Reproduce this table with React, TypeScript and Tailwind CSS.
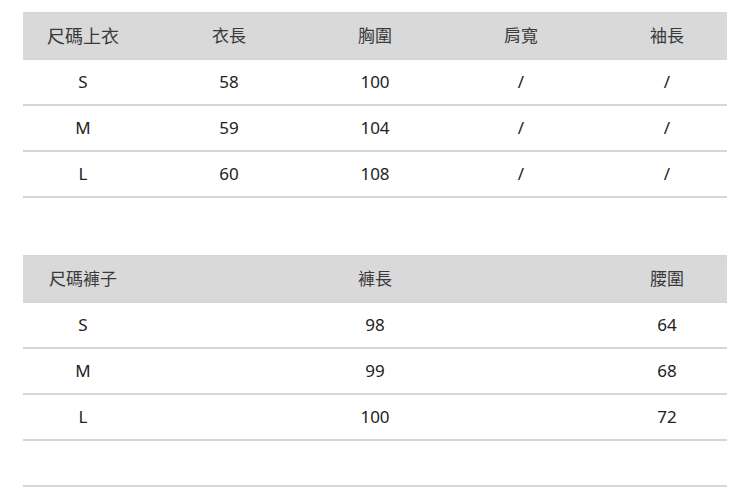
const TOPS = {
  head: ['尺碼上衣', '衣長', '胸圍', '肩寬', '袖長'],
  rows: [
    ['S', '58', '100', '/', '/'],
    ['M', '59', '104', '/', '/'],
    ['L', '60', '108', '/', '/'],
  ],
};

const PANTS = {
  head: ['尺碼褲子', '褲長', '腰圍'],
  rows: [
    ['S', '98', '64'],
    ['M', '99', '68'],
    ['L', '100', '72'],
  ],
};

const font = { fontFamily: '"Noto Sans", "Noto Sans CJK TC", sans-serif' };

// pants table uses columns 1, 3 and 5 of the same 5-column grid
const pantCols = ['col-start-1', 'col-start-3', 'col-start-5'];

function Row({ cells, head, cols }: { cells: string[]; head?: boolean; cols?: string[] }) {
  return (
    <div
      className={`h-[46px] border-b-2 border-[#d6d6d6] ${
        head ? 'h-[48px] border-t-2 bg-[#d9d9d9] text-[17px] text-[#3a3a3a]' : 'text-[17px] text-[#222]'
      }`}
    >
      <div className="-mx-[13px] grid h-full grid-cols-5 items-center text-center">
        {cells.map((c, i) => (
          <div key={i} className={`${cols ? cols[i] : ''} ${head && i === 0 && !cols ? 'text-[18px]' : ''}`}>
            {c}
          </div>
        ))}
      </div>
    </div>
  );
}

export default function App() {
  return (
    <div className="h-[490px] w-[750px] overflow-hidden bg-white px-[23px] pt-[12px]" style={font}>
      <div>
        <Row cells={TOPS.head} head />
        {TOPS.rows.map((r, i) => (
          <Row key={i} cells={r} />
        ))}
      </div>

      <div className="mt-[57px]">
        <Row cells={PANTS.head} head cols={pantCols} />
        {PANTS.rows.map((r, i) => (
          <Row key={i} cells={r} cols={pantCols} />
        ))}
        <div className="h-[46px] border-b-2 border-[#d6d6d6]"></div>
      </div>
    </div>
  );
}
